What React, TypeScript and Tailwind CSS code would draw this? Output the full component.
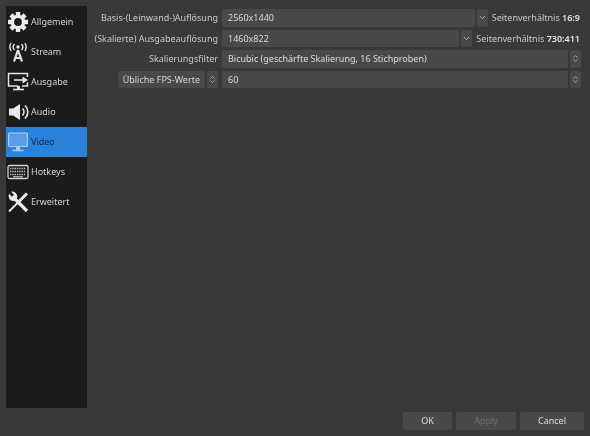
// App.tsx
import { ChevronDown, ChevronsUpDown } from 'lucide-react';
import type { ReactNode } from 'react';

function GearIcon() {
  const teeth = [0, 45, 90, 135, 180, 225, 270, 315];
  return (
    <svg width="24" height="24" viewBox="0 0 24 24" fill="none">
      {teeth.map((deg) => (
        <rect key={deg} x="9.8" y="2" width="4.4" height="5" fill="#ececec" transform={`rotate(${deg} 12 12)`} />
      ))}
      <circle cx="12" cy="12" r="5.6" stroke="#ececec" strokeWidth="3.4" />
    </svg>
  );
}

function StreamIcon() {
  return (
    <svg width="24" height="24" viewBox="0 0 24 24" fill="none" stroke="#e4e4e4">
      <circle cx="12" cy="7" r="1.7" fill="#e4e4e4" stroke="none" />
      <path d="M8.5 4a4.5 4.5 0 0 0 0 6M15.5 4a4.5 4.5 0 0 1 0 6M5 3a8 8 0 0 0 0 8M19 3a8 8 0 0 1 0 8" strokeWidth="1.4" />
      <path d="M12 10L8 21.5M12 10l4 11.5M9.5 18h5" strokeWidth="2.2" />
    </svg>
  );
}

function OutputIcon() {
  return (
    <svg width="24" height="24" viewBox="0 0 24 24" fill="none" stroke="#e4e4e4">
      <path d="M12 16H2.5V3.5h19V7" strokeWidth="1.5" />
      <path d="M21.5 12.5V16H16" strokeWidth="1.5" />
      <path d="M8 10h11" strokeWidth="1.6" />
      <path d="M16.5 6.5l5.5 3.5-5.5 3.5z" fill="#e4e4e4" stroke="none" />
      <path d="M11 16h3v3h-3z" fill="#e4e4e4" stroke="none" />
      <path d="M7 19.5h11" strokeWidth="1.6" />
    </svg>
  );
}

function AudioIcon() {
  return (
    <svg width="24" height="24" viewBox="0 0 24 24" fill="none">
      <path d="M3 8.5h4L14 4v16l-7-4.5H3z" fill="#e8e8e8" />
      <path d="M16.5 8.5a5 5 0 0 1 0 7M19 5.5a9 9 0 0 1 0 13" stroke="#e8e8e8" strokeWidth="1.7" />
    </svg>
  );
}

function MonitorIcon() {
  return (
    <svg width="24" height="24" viewBox="0 0 24 24" fill="none">
      <rect x="2.6" y="3" width="18.8" height="13.5" rx="1" fill="#5a9fe6" stroke="#a9cdf2" strokeWidth="1.2" />
      <path d="M10 17h4v3h-4z" fill="#a9cdf2" />
      <path d="M6.5 20.5h11" stroke="#a9cdf2" strokeWidth="1.5" />
    </svg>
  );
}

function KeyboardIcon() {
  return (
    <svg width="24" height="24" viewBox="0 0 24 24" fill="none">
      <rect x="2" y="5.5" width="20" height="13" rx="1.5" stroke="#cfcfcf" strokeWidth="1.3" />
      <path d="M4 8.5h16M4 11.5h16M4 14.5h16" stroke="#c4c4c4" strokeWidth="1.6" strokeDasharray="1.4 0.9" />
      <path d="M7 16.8h10" stroke="#c4c4c4" strokeWidth="1.2" />
    </svg>
  );
}

function ToolsIcon() {
  return (
    <svg width="24" height="24" viewBox="0 0 24 24" fill="none">
      <path d="M8 8l13 13" stroke="#ececec" strokeWidth="3.2" />
      <path d="M3 3.8l3 3 2-2-3-3a5 5 0 0 1 6 6.5L8 11A5 5 0 0 1 3 3.8z" fill="#ececec" />
      <path d="M21 3.5L11 13.5" stroke="#ececec" strokeWidth="3" />
      <path d="M12 12.5L3 21.5" stroke="#ececec" strokeWidth="1.8" />
    </svg>
  );
}

const navItems: { label: string; icon: ReactNode; active?: boolean }[] = [
  { label: 'Allgemein', icon: <GearIcon /> },
  { label: 'Stream', icon: <StreamIcon /> },
  { label: 'Ausgabe', icon: <OutputIcon /> },
  { label: 'Audio', icon: <AudioIcon /> },
  { label: 'Video', icon: <MonitorIcon />, active: true },
  { label: 'Hotkeys', icon: <KeyboardIcon /> },
  { label: 'Erweitert', icon: <ToolsIcon /> },
];

function Field({ value, spin }: { value: string; spin?: boolean }) {
  return (
    <div className="flex flex-1 gap-[2px] min-w-0">
      <div className="flex-1 h-[17.5px] bg-[#4a494a] rounded-[2px] pl-[6px] flex items-center text-[#dcdcdc] whitespace-nowrap">
        {value}
      </div>
      <div className="w-[11px] h-[17.5px] bg-[#4a494a] rounded-[2px] flex items-center justify-center text-[#bdbdbd]">
        {spin ? <ChevronsUpDown size={9} /> : <ChevronDown size={9} strokeWidth={2.5} />}
      </div>
    </div>
  );
}

function Row({ label, children }: { label: ReactNode; children: ReactNode }) {
  return (
    <div className="flex items-center gap-[4px] h-[17.5px]">
      <div className="w-[124px] flex justify-end whitespace-nowrap text-[#c9c9c9]">{label}</div>
      {children}
    </div>
  );
}

function Ratio({ value }: { value: string }) {
  return (
    <div className="whitespace-nowrap text-[#c9c9c9] pr-[1px]">
      Seitenverhältnis <span className="font-semibold text-[#e4e4e4]">{value}</span>
    </div>
  );
}

export default function App() {
  return (
    <div
      className="w-[590px] h-[436px] bg-[#3a393a] flex flex-col overflow-hidden text-[9px] blur-[0.45px]"
      style={{ fontFamily: '"Noto Sans", sans-serif' }}
    >
      <div className="flex flex-1 min-h-0 pt-[6px] pl-[6px]">
        <div className="w-[81px] h-[402px] bg-[#1c1b1c] flex flex-col pt-[1px]">
          {navItems.map((item) => (
            <div
              key={item.label}
              className={`h-[30px] flex items-center ${
                item.active ? 'bg-[#2a82da] text-[#0f2740]' : 'text-[#d4d4d4]'
              }`}
            >
              <div className="w-[24px] h-[24px] flex items-center justify-center">{item.icon}</div>
              <span className="ml-[1px]">{item.label}</span>
            </div>
          ))}
        </div>
        <div className="w-[487px] ml-[7px] pt-[3px] flex flex-col gap-[3px]">
          <Row label="Basis-(Leinwand-)Auflösung">
            <Field value="2560x1440" />
            <Ratio value="16:9" />
          </Row>
          <Row label="(Skalierte) Ausgabeauflösung">
            <Field value="1460x822" />
            <Ratio value="730:411" />
          </Row>
          <Row label="Skalierungsfilter">
            <Field value="Bicubic (geschärfte Skalierung, 16 Stichproben)" spin />
          </Row>
          <Row
            label={
              <div className="w-[100px] flex gap-[2px]">
                <div className="flex-1 h-[17.5px] bg-[#4a494a] rounded-[2px] flex items-center justify-end pr-[5px] text-[#d4d4d4] whitespace-nowrap">
                  Übliche FPS-Werte
                </div>
                <div className="w-[11px] h-[17.5px] bg-[#4a494a] rounded-[2px] flex items-center justify-center text-[#bdbdbd]">
                  <ChevronsUpDown size={9} />
                </div>
              </div>
            }
          >
            <Field value="60" spin />
          </Row>
        </div>
      </div>
      <div className="h-[28px] flex justify-end items-start gap-[4px] pr-[6px] text-[#dcdcdc]">
        <button className="w-[49px] h-[18px] mt-[4px] bg-[#4a494a] rounded-[2px]">OK</button>
        <button className="w-[60px] h-[18px] mt-[4px] bg-[#4a494a] rounded-[2px] text-[#6e6d6e]">Apply</button>
        <button className="w-[64px] h-[18px] mt-[4px] bg-[#4a494a] rounded-[2px]">Cancel</button>
      </div>
    </div>
  );
}
